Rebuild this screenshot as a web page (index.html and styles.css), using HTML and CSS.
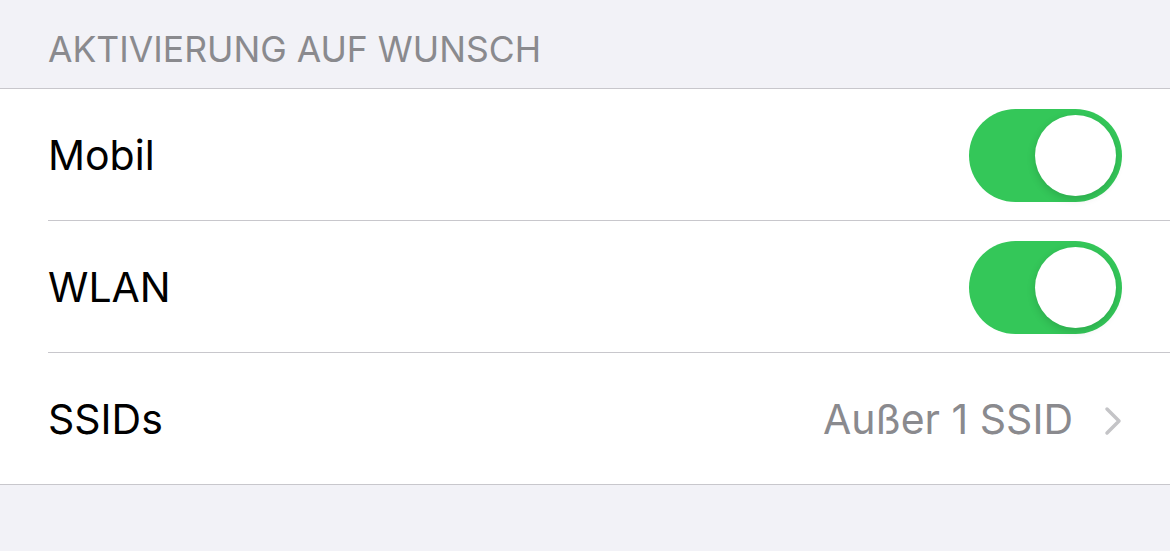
FILE: index.html
```html
<!DOCTYPE html>
<html lang="de">
<head>
    <meta charset="UTF-8">
    <meta name="viewport" content="width=device-width, initial-scale=1.0">
    <title>Aktivierung auf Wunsch</title>
    <link rel="stylesheet" href="styles.css">
</head>
<body>
    <div class="section-header">AKTIVIERUNG AUF WUNSCH</div>
    <div class="group">
        <div class="row">
            <span class="label">Mobil</span>
            <span class="switch on"><span class="knob"></span></span>
        </div>
        <div class="row">
            <span class="label">WLAN</span>
            <span class="switch on"><span class="knob"></span></span>
        </div>
        <div class="row">
            <span class="label">SSIDs</span>
            <span class="detail">
                Außer 1 SSID
                <svg class="chevron" width="18" height="30" viewBox="0 0 18 30">
                    <path d="M3 3 L15 15 L3 27" fill="none" stroke="#c4c4c7" stroke-width="3.5" stroke-linecap="round" stroke-linejoin="round"/>
                </svg>
            </span>
        </div>
    </div>
</body>
</html>
```

FILE: styles.css
```css
body {
    font-family: Inter, "Noto Sans", sans-serif;
    margin: 0;
    background-color: #f2f2f7;
}

.section-header {
    height: 89px;
    padding-left: 48px;
    box-sizing: border-box;
    padding-top: 30px;
    font-size: 35.5px;
    line-height: 40px;
    color: #8a8a8e;
    border-bottom: 1px solid #c8c7cc;
}

.group {
    background-color: #fff;
    padding-left: 48px;
    border-bottom: 1px solid #c8c7cc;
}

.row {
    display: flex;
    align-items: center;
    justify-content: space-between;
    height: 131px;
    padding-right: 48px;
    border-bottom: 1px solid #c8c7cc;
}

.row:last-child {
    border-bottom: none;
}

.label {
    font-size: 41px;
    color: #000;
}

.switch {
    position: relative;
    width: 153px;
    height: 93px;
    margin-top: 2px;
    border-radius: 47px;
    background-color: #34c759;
}

.switch .knob {
    position: absolute;
    top: 6px;
    right: 6px;
    width: 81px;
    height: 81px;
    border-radius: 50%;
    background-color: #fff;
    box-shadow: 0 3px 8px rgba(0, 0, 0, 0.15);
}

.detail {
    display: flex;
    align-items: center;
    gap: 31px;
    font-size: 41px;
    color: #8a8a8e;
}

.chevron {
    display: block;
    margin-top: 4px;
}
```
